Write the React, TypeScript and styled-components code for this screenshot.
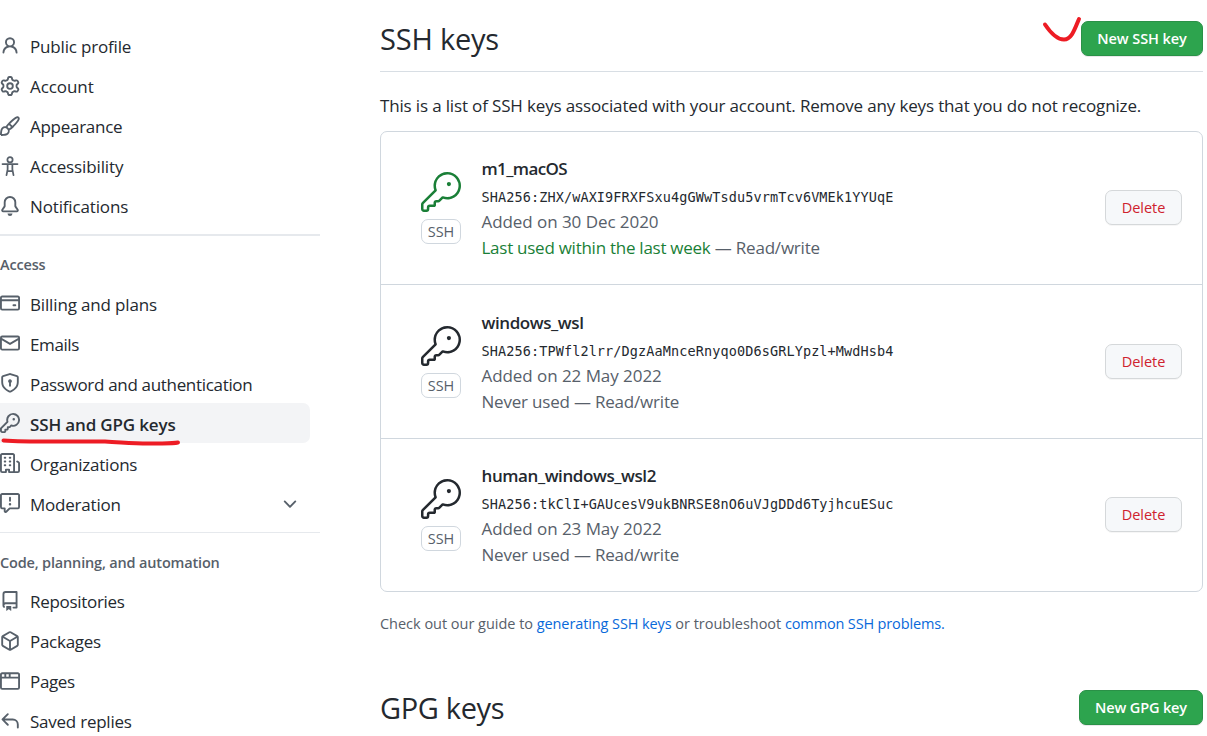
import React from 'react';
import styled, { createGlobalStyle } from 'styled-components';

const Global = createGlobalStyle`
  *, *::before, *::after { box-sizing: border-box; }
  html, body { margin: 0; background: #fff; }
  body {
    width: 1207px;
    height: 736px;
    overflow: hidden;
    font-family: "Open Sans", "Noto Sans", sans-serif;
    font-size: 17px;
    color: #24292f;
  }
`;

const ICONS = {
  person: 'M10.5 5a2.5 2.5 0 11-5 0 2.5 2.5 0 015 0zm.061 3.073a4 4 0 10-5.123 0 6.004 6.004 0 00-3.431 5.142.75.75 0 001.498.07 4.5 4.5 0 018.99 0 .75.75 0 101.498-.07 6.005 6.005 0 00-3.432-5.142z',
  gear: 'M7.429 1.525a6.593 6.593 0 011.142 0c.036.003.108.036.137.146l.289 1.105c.147.56.55.967.997 1.189.174.086.341.183.501.29.417.278.97.423 1.53.27l1.102-.303c.11-.03.175.016.195.046.219.31.41.641.573.989.014.031.022.11-.059.19l-.815.806c-.411.406-.562.957-.53 1.456a4.588 4.588 0 010 .582c-.032.499.119 1.05.53 1.456l.815.806c.08.08.073.159.059.19a6.494 6.494 0 01-.573.99c-.02.029-.086.074-.195.045l-1.103-.303c-.559-.153-1.112-.008-1.529.27-.16.107-.327.204-.5.29-.449.222-.851.628-.998 1.189l-.289 1.105c-.029.11-.101.143-.137.146a6.613 6.613 0 01-1.142 0c-.036-.003-.108-.037-.137-.146l-.289-1.105c-.147-.56-.55-.967-.997-1.189a4.502 4.502 0 01-.501-.29c-.417-.278-.97-.423-1.53-.27l-1.102.303c-.11.03-.175-.016-.195-.046a6.492 6.492 0 01-.573-.989c-.014-.031-.022-.11.059-.19l.815-.806c.411-.406.562-.957.53-1.456a4.587 4.587 0 010-.582c.032-.499-.119-1.05-.53-1.456l-.815-.806c-.08-.08-.073-.159-.059-.19a6.44 6.44 0 01.573-.99c.02-.029.086-.075.195-.045l1.103.303c.559.153 1.112.008 1.529-.27.16-.107.327-.204.5-.29.449-.222.851-.628.998-1.189l.289-1.105c.029-.11.101-.143.137-.146zM8 0c-.236 0-.47.01-.701.03-.743.065-1.29.615-1.458 1.261l-.29 1.106c-.017.066-.078.158-.211.224a5.994 5.994 0 00-.668.386c-.123.082-.233.09-.3.071L3.27 2.776c-.644-.177-1.392.02-1.82.63a7.977 7.977 0 00-.704 1.217c-.315.675-.111 1.422.363 1.891l.815.806c.05.048.098.147.088.294a6.084 6.084 0 000 .772c.01.147-.038.246-.088.294l-.815.806c-.474.469-.678 1.216-.363 1.891.2.428.436.835.704 1.218.428.609 1.176.806 1.82.63l1.103-.303c.066-.019.176-.011.299.071.213.143.436.272.668.386.133.066.194.158.212.224l.289 1.106c.169.646.715 1.196 1.458 1.26a8.094 8.094 0 001.402 0c.743-.064 1.29-.614 1.458-1.26l.29-1.106c.017-.066.078-.158.211-.224a5.98 5.98 0 00.668-.386c.123-.082.233-.09.3-.071l1.102.302c.644.177 1.392-.02 1.82-.63.268-.382.505-.789.704-1.217.315-.675.111-1.422-.364-1.891l-.814-.806c-.05-.048-.098-.147-.088-.294a6.1 6.1 0 000-.772c-.01-.147.039-.246.088-.294l.814-.806c.475-.469.679-1.216.364-1.891a7.992 7.992 0 00-.704-1.218c-.428-.609-1.176-.806-1.82-.63l-1.103.303c-.066.019-.176.011-.299-.071a5.991 5.991 0 00-.668-.386c-.133-.066-.194-.158-.212-.224L10.16 1.29C9.99.645 9.444.095 8.701.031A8.094 8.094 0 008 0zm1.5 8a1.5 1.5 0 11-3 0 1.5 1.5 0 013 0zM11 8a3 3 0 11-6 0 3 3 0 016 0z',
  brush: 'M11.134 1.535C9.722 2.562 8.16 4.057 6.889 5.312 5.8 6.387 5.041 7.401 4.575 8.294a3.745 3.745 0 00-3.227 1.054c-.43.431-.69 1.066-.86 1.657a11.982 11.982 0 00-.358 1.914A21.263 21.263 0 000 15.203v.054l.75-.007-.007.75h.054a14.404 14.404 0 00.654-.012 21.243 21.243 0 001.63-.118c.62-.07 1.3-.18 1.914-.357.592-.17 1.226-.43 1.657-.861a3.745 3.745 0 001.055-3.217c.908-.461 1.942-1.216 3.04-2.3 1.279-1.262 2.764-2.825 3.775-4.249.501-.706.923-1.428 1.125-2.096.2-.659.235-1.469-.368-2.07-.606-.607-1.42-.55-2.069-.34-.66.213-1.376.646-2.076 1.155zm-3.95 8.48a3.76 3.76 0 00-1.19-1.192 9.758 9.758 0 011.161-1.607l1.658 1.658a9.853 9.853 0 01-1.63 1.142zM12.016 2.749c-1.224.89-2.605 2.189-3.822 3.384l1.718 1.718c1.21-1.205 2.51-2.597 3.387-3.833.47-.662.78-1.227.912-1.662.134-.444.032-.551.009-.575h-.001V1.78c-.014-.014-.112-.113-.548.027-.432.14-.995.462-1.655.942zM1.62 13.089a19.56 19.56 0 00-.104 1.395 19.55 19.55 0 001.396-.104 10.528 10.528 0 001.668-.309c.526-.151.856-.325 1.011-.48a2.25 2.25 0 00-3.182-3.182c-.155.155-.329.485-.48 1.01a10.515 10.515 0 00-.309 1.67z',
  bell: 'M8 16a2 2 0 001.985-1.75c.017-.137-.097-.25-.235-.25h-3.5c-.138 0-.252.113-.235.25A2 2 0 008 16zM8 1.5A3.5 3.5 0 004.5 5v2.947c0 .346-.102.683-.294.97l-1.703 2.556a.018.018 0 00-.003.01l.001.006c0 .002.002.004.004.006a.017.017 0 00.006.004l.007.001h10.964l.007-.001a.016.016 0 00.006-.004.016.016 0 00.004-.006l.001-.007a.017.017 0 00-.003-.01l-1.703-2.554a1.75 1.75 0 01-.294-.97V5A3.5 3.5 0 008 1.5zM3 5a5 5 0 0110 0v2.947c0 .05.015.098.042.139l1.703 2.555A1.518 1.518 0 0113.482 13H2.518a1.518 1.518 0 01-1.263-2.36l1.703-2.554A.25.25 0 003 7.947V5z',
  card: 'M10.75 9a.75.75 0 000 1.5h1.5a.75.75 0 000-1.5h-1.5zM0 3.75C0 2.784.784 2 1.75 2h12.5c.966 0 1.75.784 1.75 1.75v8.5A1.75 1.75 0 0114.25 14H1.75A1.75 1.75 0 010 12.25v-8.5zm14.5 0V5h-13V3.75a.25.25 0 01.25-.25h12.5a.25.25 0 01.25.25zm0 2.75h-13v5.75c0 .138.112.25.25.25h12.5a.25.25 0 00.25-.25V6.5z',
  mail: 'M1.75 2A1.75 1.75 0 000 3.75v.736a.75.75 0 000 .027v7.737C0 13.216.784 14 1.75 14h12.5A1.75 1.75 0 0016 12.25v-8.5A1.75 1.75 0 0014.25 2H1.75zM14.5 4.07v-.32a.25.25 0 00-.25-.25H1.75a.25.25 0 00-.25.25v.32L8 7.88l6.5-3.81zm-13 1.74v6.441c0 .138.112.25.25.25h12.5a.25.25 0 00.25-.25V5.809L8.38 9.397a.75.75 0 01-.76 0L1.5 5.809z',
  shield: 'M8.533.133a1.75 1.75 0 00-1.066 0l-5.25 1.68A1.75 1.75 0 001 3.48V7c0 1.566.32 3.182 1.303 4.682.983 1.498 2.585 2.813 5.032 3.855a1.7 1.7 0 001.33 0c2.447-1.042 4.049-2.357 5.032-3.855C14.68 10.182 15 8.566 15 7V3.48a1.75 1.75 0 00-1.217-1.667L8.533.133zm-.61 1.429a.25.25 0 01.153 0l5.25 1.68a.25.25 0 01.174.238V7c0 1.358-.275 2.666-1.057 3.86-.784 1.194-2.121 2.34-4.366 3.297a.2.2 0 01-.154 0c-2.245-.956-3.582-2.104-4.366-3.298C2.775 9.666 2.5 8.36 2.5 7V3.48a.25.25 0 01.174-.237l5.25-1.68zM9.5 6.5a1.5 1.5 0 01-.75 1.3v2.45a.75.75 0 01-1.5 0V7.8A1.5 1.5 0 119.5 6.5z',
  key: 'M6.5 5.5a4 4 0 112.731 3.795.75.75 0 00-.768.18L7.44 10.5H6.25a.75.75 0 00-.75.75v1.19l-.06.06H4.25a.75.75 0 00-.75.75v1.19l-.06.06H1.75a.25.25 0 01-.25-.25v-1.69l5.024-5.023a.75.75 0 00.181-.768A3.995 3.995 0 016.5 5.5zm4-5.5a5.5 5.5 0 00-5.348 6.788L.22 11.72a.75.75 0 00-.22.53v2C0 15.216.784 16 1.75 16h2a.75.75 0 00.53-.22l.5-.5a.75.75 0 00.22-.53V14h.75a.75.75 0 00.53-.22l.5-.5a.75.75 0 00.22-.53V12h.75a.75.75 0 00.53-.22l.932-.932A5.5 5.5 0 1010.5 0zm.5 6a1 1 0 100-2 1 1 0 000 2z',
  org: 'M1.5 14.25c0 .138.112.25.25.25H4v-1.25a.75.75 0 01.75-.75h2.5a.75.75 0 01.75.75v1.25h2.25a.25.25 0 00.25-.25V1.75a.25.25 0 00-.25-.25h-8.5a.25.25 0 00-.25.25v12.5zM1.75 16A1.75 1.75 0 010 14.25V1.75C0 .784.784 0 1.75 0h8.5C11.216 0 12 .784 12 1.75v12.5c0 .085-.006.168-.018.25h2.268a.25.25 0 00.25-.25V8.285a.25.25 0 00-.111-.208l-1.055-.703a.75.75 0 11.832-1.248l1.055.703c.487.325.779.871.779 1.456v5.965A1.75 1.75 0 0114.25 16h-3.5a.75.75 0 01-.197-.026c-.099.017-.2.026-.303.026h-3a.75.75 0 01-.75-.75V14h-1v1.25a.75.75 0 01-.75.75h-3zM3 3.75A.75.75 0 013.75 3h.5a.75.75 0 010 1.5h-.5A.75.75 0 013 3.75zM3.75 6a.75.75 0 000 1.5h.5a.75.75 0 000-1.5h-.5zM3 9.75A.75.75 0 013.75 9h.5a.75.75 0 010 1.5h-.5A.75.75 0 013 9.75zM7.75 9a.75.75 0 000 1.5h.5a.75.75 0 000-1.5h-.5zM7 6.75A.75.75 0 017.75 6h.5a.75.75 0 010 1.5h-.5A.75.75 0 017 6.75zM7.75 3a.75.75 0 000 1.5h.5a.75.75 0 000-1.5h-.5z',
  report: 'M1.75 1.5a.25.25 0 00-.25.25v9.5c0 .138.112.25.25.25h2a.75.75 0 01.75.75v2.19l2.72-2.72a.75.75 0 01.53-.22h6.5a.25.25 0 00.25-.25v-9.5a.25.25 0 00-.25-.25H1.75zM0 1.75C0 .784.784 0 1.75 0h12.5C15.216 0 16 .784 16 1.75v9.5A1.75 1.75 0 0114.25 13H8.06l-2.573 2.573A1.457 1.457 0 013 14.543V13H1.75A1.75 1.75 0 010 11.25v-9.5zM9 9a1 1 0 11-2 0 1 1 0 012 0zm-.25-5.25a.75.75 0 00-1.5 0v2.5a.75.75 0 001.5 0v-2.5z',
  repo: 'M2 2.5A2.5 2.5 0 014.5 0h8.75a.75.75 0 01.75.75v12.5a.75.75 0 01-.75.75h-2.5a.75.75 0 110-1.5h1.75v-2h-8a1 1 0 00-.714 1.7.75.75 0 01-1.072 1.05A2.495 2.495 0 012 11.5v-9zm10.5-1V9h-8c-.356 0-.694.074-1 .208V2.5a1 1 0 011-1h8zM5 12.25v3.25a.25.25 0 00.4.2l1.45-1.087a.25.25 0 01.3 0L8.6 15.7a.25.25 0 00.4-.2v-3.25a.25.25 0 00-.25-.25h-3.5a.25.25 0 00-.25.25z',
  package: 'M8.878.392a1.75 1.75 0 00-1.756 0l-5.25 3.045A1.75 1.75 0 001 4.951v6.098c0 .624.332 1.2.872 1.514l5.25 3.045a1.75 1.75 0 001.756 0l5.25-3.045c.54-.313.872-.89.872-1.514V4.951c0-.624-.332-1.2-.872-1.514L8.878.392zM7.875 1.69a.25.25 0 01.25 0l4.63 2.685L8 7.133 3.245 4.375l4.63-2.685zM2.5 5.677v5.372c0 .09.047.171.125.216l4.625 2.683V8.432L2.5 5.677zm6.25 8.271l4.625-2.683a.25.25 0 00.125-.216V5.677L8.75 8.432v5.516z',
  browser: 'M0 2.75C0 1.784.784 1 1.75 1h12.5c.966 0 1.75.784 1.75 1.75v10.5A1.75 1.75 0 0114.25 15H1.75A1.75 1.75 0 010 13.25V2.75zm1.75-.25a.25.25 0 00-.25.25V4.5h2v-2H1.75zM5 2.5v2h2v-2H5zm3.5 0v2h6V2.75a.25.25 0 00-.25-.25H8.5zm6 3.5h-13v7.25c0 .138.112.25.25.25h12.5a.25.25 0 00.25-.25V6z',
  reply: 'M6.78 1.97a.75.75 0 010 1.06L3.81 6h6.44A4.75 4.75 0 0115 10.75v2.5a.75.75 0 01-1.5 0v-2.5a3.25 3.25 0 00-3.25-3.25H3.81l2.97 2.97a.75.75 0 11-1.06 1.06L1.47 7.28a.75.75 0 010-1.06l4.25-4.25a.75.75 0 011.06 0z',
  chevron: 'M12.78 6.22a.75.75 0 010 1.06l-4.25 4.25a.75.75 0 01-1.06 0L3.22 7.28a.75.75 0 011.06-1.06L8 9.94l3.72-3.72a.75.75 0 011.06 0z',
};
const KEY_LARGE = 'M16.75 8.5a1.25 1.25 0 100-2.5 1.25 1.25 0 000 2.5zM15.75 0a8.25 8.25 0 00-7.851 10.79L.513 18.178A1.75 1.75 0 000 19.414v2.836C0 23.217.784 24 1.75 24h1.5A1.75 1.75 0 005 22.25v-1a.25.25 0 01.25-.25h2.735a.75.75 0 00.545-.22l.214-.213A.875.875 0 009 19.948V18.5a.25.25 0 01.25-.25h1.086c.464 0 .91-.184 1.237-.513l1.636-1.636A8.25 8.25 0 1015.75 0zM9 8.25a6.75 6.75 0 114.288 6.287.75.75 0 00-.804.168l-1.971 1.972a.25.25 0 01-.177.073H9.25A1.75 1.75 0 007.5 18.5v1H5.25a1.75 1.75 0 00-1.75 1.75v1a.25.25 0 01-.25.25h-1.5a.25.25 0 01-.25-.25v-2.836a.25.25 0 01.073-.177l7.722-7.721a.75.75 0 00.168-.804A6.73 6.73 0 019 8.25z';

type IconName = keyof typeof ICONS | 'accessibility';

const Glyph = styled.svg`
  display: block;
  width: 20px;
  height: 20px;
  flex: none;
  fill: #57606a;
`;

function Icon({ name }: { name: IconName }) {
  if (name === 'accessibility') {
    return (
      <Glyph viewBox="0 0 16 16">
        <g fill="none" stroke="#57606a" strokeWidth="1.4" strokeLinecap="round" strokeLinejoin="round">
          <circle cx="8" cy="2.9" r="2.1" />
          <path d="M2 6.4h12M6.1 6.5v4.2l-.9 4.6M9.9 6.5v4.2l.9 4.6M5.8 12.1h4.4" />
        </g>
      </Glyph>
    );
  }
  return (
    <Glyph viewBox="0 0 16 16">
      <path fillRule="evenodd" d={ICONS[name]} />
    </Glyph>
  );
}

const Page = styled.div`
  display: flex;
  width: 1207px;
  height: 736px;
  overflow: hidden;
`;

const Sidebar = styled.nav`
  width: 320px;
  flex: none;
  padding-top: 26px;
`;

const NavItem = styled.a<{ $active?: boolean }>`
  position: relative;
  display: flex;
  align-items: center;
  gap: 10px;
  width: 310px;
  height: 40px;
  padding-right: 10px;
  border-radius: 0 7px 7px 0;
  background: ${(p) => (p.$active ? '#f3f4f6' : 'transparent')};
  font-weight: ${(p) => (p.$active ? 600 : 400)};
  white-space: nowrap;
`;

const NavLabel = styled.span<{ $ls?: number; $low?: boolean }>`
  flex: 1;
  line-height: 24px;
  padding-top: ${(p) => (p.$low ? 3 : 1)}px;
  letter-spacing: ${(p) => p.$ls ?? 0}px;
`;

const Divider = styled.hr<{ $thick?: boolean }>`
  width: 320px;
  height: ${(p) => (p.$thick ? 2 : 1)}px;
  margin: ${(p) => (p.$thick ? 8 : 9)}px 0 0;
  border: 0;
  background: #e6e9ed;
`;

const NavHeading = styled.h3<{ $top: number }>`
  margin: ${(p) => p.$top}px 0 8px;
  font-size: 14.5px;
  line-height: 20px;
  font-weight: 600;
  color: #57606a;
  letter-spacing: -0.17px;
  white-space: nowrap;
`;

const Underline = styled.svg`
  position: absolute;
  left: 0;
  top: 33px;
  width: 184px;
  height: 10px;
  overflow: visible;
`;

const Main = styled.main`
  width: 823px;
  margin-left: 60px;
  padding-top: 21px;
`;

const SectionHead = styled.header<{ $ruled?: boolean }>`
  position: relative;
  display: flex;
  justify-content: space-between;
  align-items: flex-start;
  height: 51px;
  border-bottom: ${(p) => (p.$ruled ? '1px solid #d8dee4' : '0')};
`;

const Title = styled.h2<{ $ls: number }>`
  margin: 0;
  font-size: 29px;
  line-height: 36px;
  font-weight: 400;
  letter-spacing: ${(p) => p.$ls}px;
`;

const Button = styled.button<{ $width: number; $ls?: number }>`
  flex: none;
  height: 35px;
  width: ${(p) => p.$width}px;
  padding: 0;
  border: 1px solid #d5d8da;
  border-radius: 7px;
  background: #f6f8fa;
  box-shadow: 0 1px 0 rgba(27, 31, 36, 0.04);
  color: #cf222e;
  font: 400 14.5px/33px "Open Sans", "Noto Sans", sans-serif;
  letter-spacing: ${(p) => p.$ls ?? 0}px;
  text-align: center;
  white-space: nowrap;
`;

const PrimaryButton = styled(Button)`
  border-color: #2a9147;
  background: #2da44e;
  box-shadow: 0 1px 0 rgba(27, 31, 36, 0.1);
  color: #fff;
  font-weight: 600;
`;

const DeleteButton = styled(Button)`
  margin-bottom: 1px;
`;

const Tick = styled.svg`
  position: absolute;
  right: 121px;
  top: -5px;
  width: 40px;
  height: 28px;
`;

const Intro = styled.p`
  margin: 22px 0 13px;
  line-height: 24px;
  letter-spacing: -0.155px;
  white-space: nowrap;
`;

const KeyList = styled.ul`
  list-style: none;
  margin: 0;
  padding: 0;
  height: 461px;
  display: grid;
  grid-template-rows: 152px 154px 153px;
  border: 1px solid #d0d7de;
  border-radius: 7px;
`;

const KeyRow = styled.li`
  display: flex;
  align-items: center;
  padding: 0 20px 0 40px;
  & + & { border-top: 1px solid #d0d7de; }
`;

const KeyMark = styled.div<{ $fresh?: boolean }>`
  width: 40px;
  margin-right: 20.5px;
  display: flex;
  flex-direction: column;
  align-items: center;
  gap: 7px;
  svg { display: block; width: 40px; height: 40px; fill: ${(p) => (p.$fresh ? '#1a7f37' : '#24292f')}; }
`;

const Badge = styled.span`
  width: 40px;
  height: 25px;
  border: 1px solid #d0d7de;
  border-radius: 7px;
  color: #57606a;
  font-size: 14.5px;
  line-height: 23px;
  text-align: center;
`;

const KeyInfo = styled.div`
  flex: 1;
  display: flex;
  flex-direction: column;
  padding-top: 1px;
  white-space: nowrap;
`;

const KeyName = styled.strong<{ $ls: number }>`
  font-weight: 600;
  line-height: 26px;
  height: 28px;
  letter-spacing: ${(p) => p.$ls}px;
`;

const Fingerprint = styled.code`
  font: 13.5px/27px "DejaVu Sans Mono", monospace;
  letter-spacing: 0.113px;
  height: 25px;
`;

const Meta = styled.span<{ $ls: number }>`
  color: #57606a;
  line-height: 26px;
  letter-spacing: ${(p) => p.$ls}px;
`;

const Fresh = styled.span`
  color: #1a7f37;
  letter-spacing: -0.26px;
`;

const Guide = styled.p`
  margin: 20px 0 55px;
  font-size: 14.5px;
  line-height: 23px;
  letter-spacing: -0.02px;
  color: #57606a;
  white-space: nowrap;
`;

const Link = styled.a<{ $ls: number }>`
  color: #0969da;
  letter-spacing: ${(p) => p.$ls}px;
`;

type Item = { icon: IconName; label: string; ls?: number; active?: boolean; chevron?: boolean };

const profile: Item[] = [
  { icon: 'person', label: 'Public profile', ls: -0.17 },
  { icon: 'gear', label: 'Account', ls: -0.07 },
  { icon: 'brush', label: 'Appearance', ls: -0.27 },
  { icon: 'accessibility', label: 'Accessibility', ls: -0.12 },
  { icon: 'bell', label: 'Notifications', ls: -0.15 },
];
const access: Item[] = [
  { icon: 'card', label: 'Billing and plans', ls: -0.15 },
  { icon: 'mail', label: 'Emails', ls: -0.4 },
  { icon: 'shield', label: 'Password and authentication', ls: -0.32 },
  { icon: 'key', label: 'SSH and GPG keys', ls: -0.15, active: true },
  { icon: 'org', label: 'Organizations', ls: -0.22 },
  { icon: 'report', label: 'Moderation', ls: -0.22, chevron: true },
];
const code: Item[] = [
  { icon: 'repo', label: 'Repositories', ls: -0.3 },
  { icon: 'package', label: 'Packages', ls: -0.28 },
  { icon: 'browser', label: 'Pages', ls: -0.35 },
  { icon: 'reply', label: 'Saved replies', ls: -0.24 },
];

const keys = [
  { name: 'm1_macOS', ls: -0.6, print: 'ZHX/wAXI9FRXFSxu4gGWwTsdu5vrmTcv6VMEk1YYUqE', added: '30 Dec 2020', fresh: true },
  { name: 'windows_wsl', ls: -0.42, print: 'TPWfl2lrr/DgzAaMnceRnyqo0D6sGRLYpzl+MwdHsb4', added: '22 May 2022' },
  { name: 'human_windows_wsl2', ls: -0.42, print: 'tkClI+GAUcesV9ukBNRSE8nO6uVJgDDd6TyjhcuESuc', added: '23 May 2022' },
];

function Nav({ items, low }: { items: Item[]; low?: boolean }) {
  return (
    <>
      {items.map((it) => (
        <NavItem key={it.label} $active={it.active}>
          <Icon name={it.icon} />
          <NavLabel $ls={it.ls} $low={low}>{it.label}</NavLabel>
          {it.chevron && <Icon name="chevron" />}
          {it.active && (
            <Underline viewBox="0 0 184 10">
              <path d="M3.5 4.5C35 6.500 70 5 105 5.500C125 6.500 135 8 155 7.500C165 7.300 173 7.600 178 6.500" fill="none" stroke="#ed1c24" strokeWidth="4" strokeLinecap="round" />
            </Underline>
          )}
        </NavItem>
      ))}
    </>
  );
}

export default function App() {
  return (
    <>
      <Global />
      <Page>
        <Sidebar>
          <Nav items={profile} />
          <Divider $thick />
          <NavHeading $top={19}>Access</NavHeading>
          <Nav items={access} low />
          <Divider />
          <NavHeading $top={20}>Code, planning, and automation</NavHeading>
          <Nav items={code} />
        </Sidebar>
        <Main>
          <SectionHead $ruled>
            <Title $ls={-0.2}>SSH keys</Title>
            <Tick viewBox="0 0 40 28">
              <path d="M3 8.500C8 16 15 23.500 22 23.500C30 23.500 33 12 37 3" fill="none" stroke="#ed1c24" strokeWidth="4" strokeLinecap="round" />
            </Tick>
            <PrimaryButton $width={122} $ls={-0.08}>New SSH key</PrimaryButton>
          </SectionHead>
          <Intro>This is a list of SSH keys associated with your account. Remove any keys that you do not recognize.</Intro>
          <KeyList>
            {keys.map((k) => (
              <KeyRow key={k.name}>
                <KeyMark $fresh={k.fresh}>
                  <svg viewBox="0 0 24 24"><path fillRule="evenodd" d={KEY_LARGE} /></svg>
                  <Badge>SSH</Badge>
                </KeyMark>
                <KeyInfo>
                  <KeyName $ls={k.ls}>{k.name}</KeyName>
                  <Fingerprint>SHA256:{k.print}</Fingerprint>
                  <Meta $ls={-0.06}>Added on {k.added}</Meta>
                  <Meta $ls={-0.2}>{k.fresh ? <Fresh>Last used within the last week</Fresh> : 'Never used'} — Read/write</Meta>
                </KeyInfo>
                <DeleteButton $width={77} $ls={-0.05}>Delete</DeleteButton>
              </KeyRow>
            ))}
          </KeyList>
          <Guide>
            Check out our guide to <Link $ls={-0.1}>generating SSH keys</Link> or troubleshoot <Link $ls={-0.15}>common SSH problems.</Link>
          </Guide>
          <SectionHead>
            <Title $ls={-0.35}>GPG keys</Title>
            <PrimaryButton $width={124} $ls={-0.15}>New GPG key</PrimaryButton>
          </SectionHead>
        </Main>
      </Page>
    </>
  );
}
